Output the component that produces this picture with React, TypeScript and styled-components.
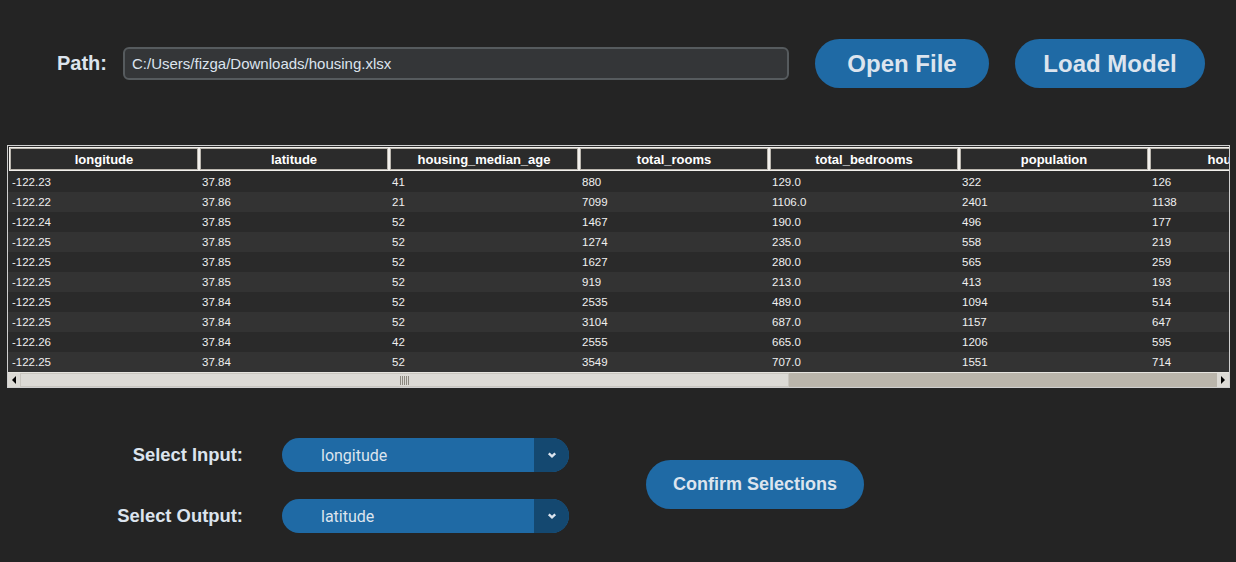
import { createGlobalStyle } from "styled-components";
import styled from "styled-components";

const GlobalStyle = createGlobalStyle`
  body {
    margin: 0;
    background: #242424;
    font-family: "Liberation Sans", Arial, sans-serif;
  }
`;

const columns = [
  "longitude",
  "latitude",
  "housing_median_age",
  "total_rooms",
  "total_bedrooms",
  "population",
  "households",
];

const rows = [
  ["-122.23", "37.88", "41", "880", "129.0", "322", "126"],
  ["-122.22", "37.86", "21", "7099", "1106.0", "2401", "1138"],
  ["-122.24", "37.85", "52", "1467", "190.0", "496", "177"],
  ["-122.25", "37.85", "52", "1274", "235.0", "558", "219"],
  ["-122.25", "37.85", "52", "1627", "280.0", "565", "259"],
  ["-122.25", "37.85", "52", "919", "213.0", "413", "193"],
  ["-122.25", "37.84", "52", "2535", "489.0", "1094", "514"],
  ["-122.25", "37.84", "52", "3104", "687.0", "1157", "647"],
  ["-122.26", "37.84", "42", "2555", "665.0", "1206", "595"],
  ["-122.25", "37.84", "52", "3549", "707.0", "1551", "714"],
];

const Page = styled.div`
  width: 1236px;
  height: 562px;
  display: flex;
  flex-direction: column;
  overflow: hidden;
`;

const TopBar = styled.div`
  display: flex;
  align-items: center;
  padding: 39px 0 0 57px;
  height: 49px;
`;

const PathLabel = styled.span`
  font-weight: bold;
  font-size: 20px;
  color: #dce4ee;
  margin-right: 16px;
`;

const PathInput = styled.div`
  box-sizing: border-box;
  width: 666px;
  height: 33px;
  border: 2px solid #565b5e;
  background: #343638;
  border-radius: 6px;
  padding-left: 7px;
  display: flex;
  align-items: center;
  font-size: 15px;
  color: #dce4ee;
`;

const PillButton = styled.button<{ $w: number; $size: number }>`
  width: ${(p) => p.$w}px;
  height: 49px;
  margin-left: 26px;
  border: none;
  border-radius: 25px;
  background: #1f6aa5;
  color: #dce4ee;
  font-family: "Liberation Sans", Arial, sans-serif;
  font-weight: bold;
  font-size: ${(p) => p.$size}px;
  padding: 0;
`;

const ConfirmButton = styled(PillButton)`
  margin: 0 0 3px 77px;
`;

const TableFrame = styled.div`
  box-sizing: border-box;
  margin: 57px 0 0 7px;
  width: 1223px;
  border: 1px solid #cfcfcf;
  background: #2a2a2a;
  overflow: hidden;
`;

const Grid = styled.div`
  display: grid;
  grid-template-columns: repeat(7, 190px);
`;

const HeaderRow = styled(Grid)`
  padding: 1px 0 1px 1px;
`;

const HeaderCell = styled.div`
  box-sizing: border-box;
  height: 24px;
  border: 1px solid #f2f0ec;
  box-shadow: inset 0 0 0 1px #b9b5ad;
  background: #2b2b2b;
  color: #ffffff;
  font-family: "Liberation Sans", Arial, sans-serif;
  font-weight: bold;
  font-size: 13px;
  display: flex;
  align-items: center;
  justify-content: center;
  white-space: nowrap;
  overflow: hidden;
`;

const DataRow = styled(Grid)<{ $alt: boolean }>`
  height: 20px;
  background: ${(p) => (p.$alt ? "#333333" : "#2a2a2a")};
`;

const DataCell = styled.div`
  padding-left: 4px;
  display: flex;
  align-items: center;
  font-size: 11.5px;
  color: #f0f0f0;
`;

const ScrollBar = styled.div`
  display: flex;
  height: 14px;
  border-top: 1px solid #e6e4df;
  background: #dcdad5;
`;

const ArrowBtn = styled.div`
  width: 12px;
  display: flex;
  align-items: center;
  justify-content: center;
  background: #dcdad5;
`;

const Thumb = styled.div`
  width: 769px;
  background: #dcdad5;
  border: 1px solid #c9c6bf;
  box-sizing: border-box;
  display: flex;
  align-items: center;
  justify-content: center;
`;

const Grip = styled.div`
  width: 9px;
  height: 9px;
  background: repeating-linear-gradient(
    90deg,
    #8c887f 0 1px,
    transparent 1px 2px
  );
`;

const Trough = styled.div`
  flex: 1;
  background: #bab5ab;
`;

const Bottom = styled.div`
  display: flex;
  align-items: center;
  margin-top: 50px;
  padding-left: 63px;
`;

const SelectGrid = styled.div`
  display: grid;
  grid-template-columns: 180px 287px;
  column-gap: 39px;
  row-gap: 27px;
  align-items: center;
`;

const SelectLabel = styled.span`
  text-align: right;
  font-weight: bold;
  font-size: 18.4px;
  color: #dce4ee;
`;

const Combo = styled.div`
  height: 34px;
  border-radius: 17px;
  background: #1f6aa5;
  display: flex;
  overflow: hidden;
`;

const ComboText = styled.div`
  flex: 1;
  padding-left: 39px;
  display: flex;
  align-items: center;
  font-family: Roboto, "Liberation Sans", sans-serif;
  font-size: 16px;
  color: #dce4ee;
`;

const ComboArrow = styled.div`
  width: 35px;
  background: #144870;
  display: flex;
  align-items: center;
  justify-content: center;
`;

const Chevron = () => (
  <svg width="10" height="6" viewBox="0 0 10 6">
    <path d="M1.8 1.3 L5 4.3 L8.2 1.3" fill="none" stroke="#dce4ee" strokeWidth="2.4" />
  </svg>
);

const Triangle = ({ dir }: { dir: "left" | "right" }) => (
  <svg width="6" height="8" viewBox="0 0 6 8">
    <path d={dir === "left" ? "M5 0 L1 4 L5 8 Z" : "M1 0 L5 4 L1 8 Z"} fill="#000" />
  </svg>
);

const Select = ({ label, value }: { label: string; value: string }) => (
  <>
    <SelectLabel>{label}</SelectLabel>
    <Combo>
      <ComboText>{value}</ComboText>
      <ComboArrow>
        <Chevron />
      </ComboArrow>
    </Combo>
  </>
);

export default function App() {
  return (
    <Page>
      <GlobalStyle />
      <TopBar>
        <PathLabel>Path:</PathLabel>
        <PathInput>C:/Users/fizga/Downloads/housing.xlsx</PathInput>
        <PillButton $w={174} $size={24}>Open File</PillButton>
        <PillButton $w={190} $size={24}>Load Model</PillButton>
      </TopBar>

      <TableFrame>
        <HeaderRow>
          {columns.map((c) => (
            <HeaderCell key={c}>{c}</HeaderCell>
          ))}
        </HeaderRow>
        {rows.map((r, i) => (
          <DataRow key={i} $alt={i % 2 === 1}>
            {r.map((v, j) => (
              <DataCell key={j}>{v}</DataCell>
            ))}
          </DataRow>
        ))}
        <ScrollBar>
          <ArrowBtn>
            <Triangle dir="left" />
          </ArrowBtn>
          <Thumb>
            <Grip />
          </Thumb>
          <Trough />
          <ArrowBtn>
            <Triangle dir="right" />
          </ArrowBtn>
        </ScrollBar>
      </TableFrame>

      <Bottom>
        <SelectGrid>
          <Select label="Select Input:" value="longitude" />
          <Select label="Select Output:" value="latitude" />
        </SelectGrid>
        <ConfirmButton $w={218} $size={18}>
          Confirm Selections
        </ConfirmButton>
      </Bottom>
    </Page>
  );
}
